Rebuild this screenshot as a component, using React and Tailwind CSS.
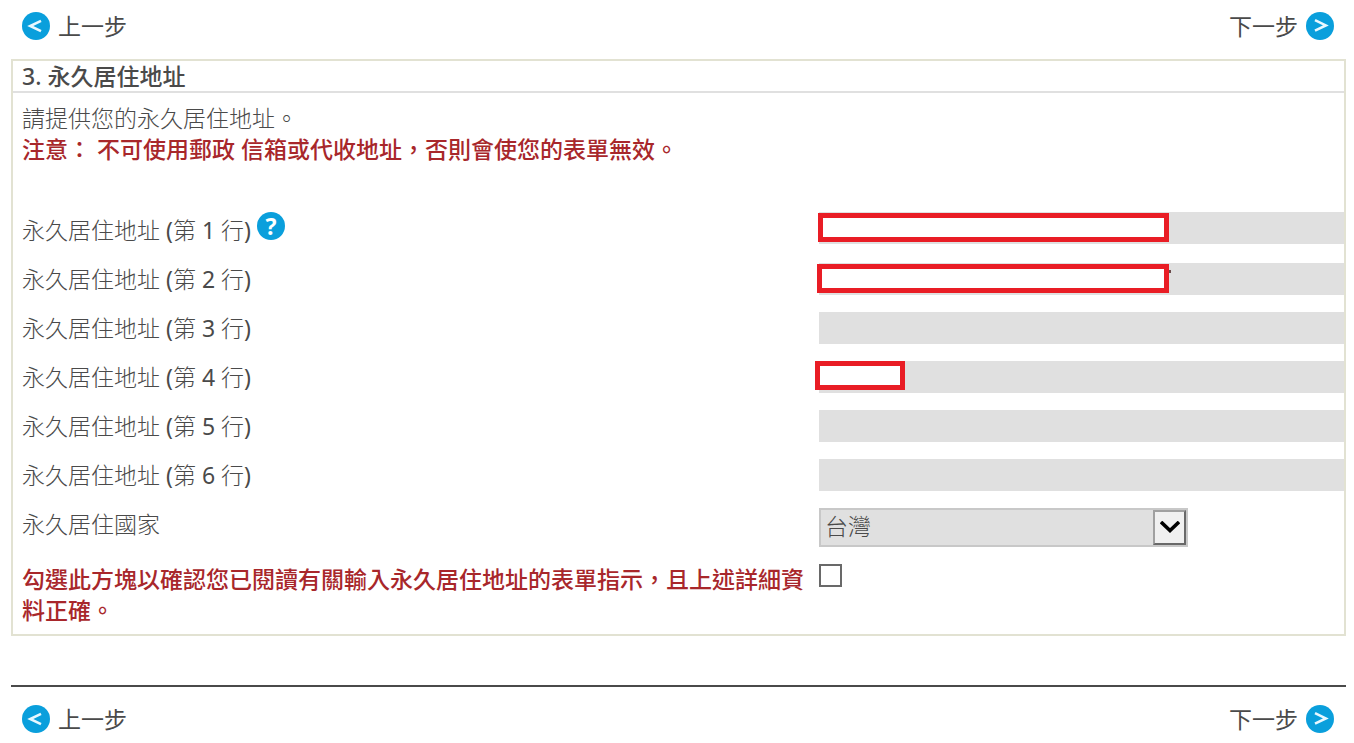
/**
 * Permanent residence address - step 3 of the form
 */
import React, { useState } from 'react';

const initialLines = [
  { id: 1, mask: 'left-[-1px] top-px w-[351px]', help: true },
  { id: 2, mask: 'left-[-2px] top-px w-[352px]', tail: true },
  { id: 3 },
  { id: 4, mask: 'left-[-4px] top-0 w-[90px]' },
  { id: 5 },
  { id: 6 },
];

function ArrowIcon({ direction }) {
  return (
    <svg viewBox="0 0 28 28" className="size-7 shrink-0" aria-hidden="true">
      <circle cx="14" cy="14" r="14" fill="#0a9fdc" />
      <path
        d={direction === 'left' ? 'M19 8.8 L8.2 14 L19 19.2' : 'M9 8.2 L19.8 13.4 L9 18.6'}
        fill="none"
        stroke="#e9f8ff"
        strokeWidth="2.6"
      />
    </svg>
  );
}

function StepNav() {
  return (
    <nav className="flex items-center justify-between pl-[11px] pr-3">
      <button type="button" className="flex h-7 items-center gap-2">
        <ArrowIcon direction="left" />
        <span>上一步</span>
      </button>
      <button type="button" className="flex h-7 items-center gap-2">
        <span>下一步</span>
        <ArrowIcon direction="right" />
      </button>
    </nav>
  );
}

function AddressLine({ line, value, onChange }) {
  const inputId = `address-line-${line.id}`;
  return (
    <div className={`grid grid-cols-[797fr_525fr] items-start ${line.help ? 'h-[51px]' : 'h-[49px]'}`}>
      <div className="flex items-start gap-1.5">
        <label htmlFor={inputId} className={`font-light leading-8 ${line.help ? 'pt-0.5' : ''}`}>
          永久居住地址 <span className="font-normal">(</span>第 <span className="font-normal">{line.id}</span> 行<span className="font-normal">)</span>
        </label>
        {line.help && (
          <button
            type="button"
            aria-label="說明"
            className="flex size-7 items-center justify-center rounded-full bg-[#0a9fdc] font-bold leading-7 text-white"
          >
            ?
          </button>
        )}
      </div>
      <div className="relative">
        <input
          id={inputId}
          type="text"
          value={value}
          onChange={(e) => onChange(line.id, e.target.value)}
          className="block h-8 w-full bg-[#e0e0e0] px-1.5 outline-none"
        />
        {/* private values are covered */}
        {line.mask && <div className={`absolute h-[29px] border-[5px] border-[#e91d25] bg-white ${line.mask}`} />}
        {line.tail && <div className="absolute left-[350px] top-[7px] h-[3px] w-0.5 bg-[#6b4a4a]" />}
      </div>
    </div>
  );
}

export default function App() {
  const [lines, setLines] = useState({});
  const [country, setCountry] = useState('TW');
  const [confirmed, setConfirmed] = useState(false);

  const handleLineChange = (id, value) => setLines(prev => ({ ...prev, [id]: value }));

  return (
    <div className="bg-white pb-2.5 pl-[11px] pr-2 pt-3 font-['Noto_Sans','Noto_Sans_CJK_TC',sans-serif] text-[23px] leading-[31px] text-[#4a4a4a]">
      <StepNav />

      <section className="mt-[19px] border-2 border-[#e2e2d2]">
        <h2 className="border-b-2 border-[#e0e0e0] pl-[9px] font-medium leading-[30px]">3. 永久居住地址</h2>

        <form className="pb-2 pl-[9px] pt-2.5" onSubmit={(e) => e.preventDefault()}>
          <p className="font-light">請提供您的永久居住地址。</p>
          <p className="font-medium text-[#a8272b]">注意： 不可使用郵政 信箱或代收地址，否則會使您的表單無效。</p>

          <div className="mt-[47px]">
            {initialLines.map(line => (
              <AddressLine key={line.id} line={line} value={lines[line.id] || ''} onChange={handleLineChange} />
            ))}
          </div>

          {/* Country */}
          <div className="grid grid-cols-[797fr_525fr] items-start">
            <label htmlFor="country" className="font-light leading-8">永久居住國家</label>
            <div className="relative w-[369px] max-w-full">
              <select
                id="country"
                value={country}
                onChange={(e) => setCountry(e.target.value)}
                className="block h-[39px] w-full appearance-none border-2 border-[#c8c8c8] bg-[#e0e0e0] pb-0.5 pl-1 pr-10 font-light outline-none"
              >
                <option value="TW">台灣</option>
              </select>
              <span className="pointer-events-none absolute right-0.5 top-0.5 flex h-[35px] w-[33px] items-center justify-center border-2 border-b-[#696969] border-l-[#a0a0a0] border-r-[#696969] border-t-[#a0a0a0] bg-[#f0f0f0]">
                <svg viewBox="0 0 20 14" className="h-3.5 w-5" aria-hidden="true">
                  <path d="M1 1 L10 9.5 L19 1" fill="none" stroke="#000" strokeWidth="3.6" />
                </svg>
              </span>
            </div>
          </div>

          {/* Confirmation */}
          <div className="mt-[17px] grid grid-cols-[797fr_525fr] items-start">
            <label htmlFor="confirm" className="font-medium text-[#a8272b]">
              勾選此方塊以確認您已閱讀有關輸入永久居住地址的表單指示，且上述詳細資料正確。
            </label>
            <input
              id="confirm"
              type="checkbox"
              checked={confirmed}
              onChange={(e) => setConfirmed(e.target.checked)}
              className="size-[23px] appearance-none border-2 border-[#696969] bg-white checked:bg-[#696969]"
            />
          </div>
        </form>
      </section>

      <footer className="mt-[49px] border-t-2 border-[#4a4a4a] pt-[18px]">
        <StepNav />
      </footer>
    </div>
  );
}
